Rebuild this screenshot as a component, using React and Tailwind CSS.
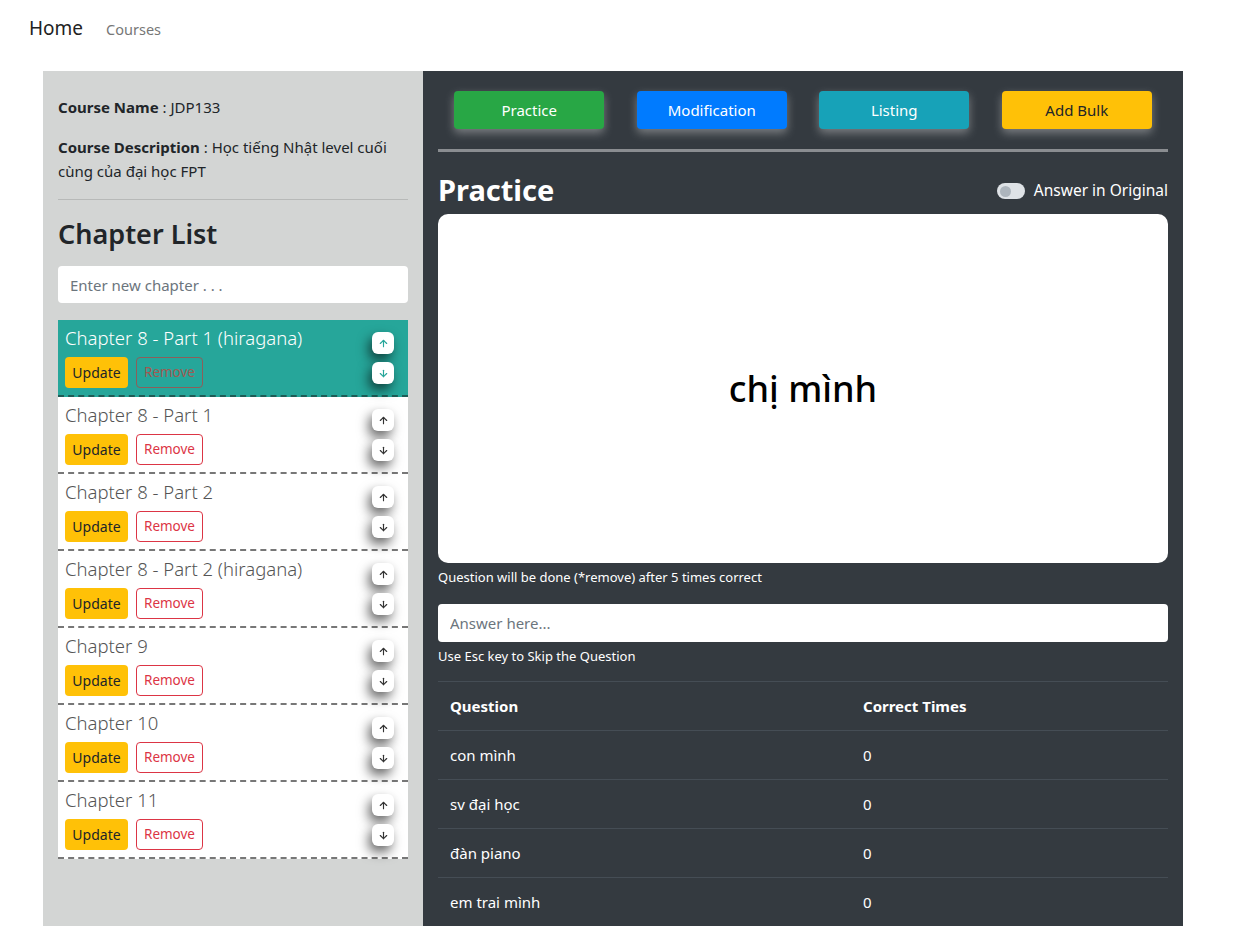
import { ArrowUp, ArrowDown } from 'lucide-react';

const chapters = [
  'Chapter 8 - Part 1 (hiragana)',
  'Chapter 8 - Part 1',
  'Chapter 8 - Part 2',
  'Chapter 8 - Part 2 (hiragana)',
  'Chapter 9',
  'Chapter 10',
  'Chapter 11',
];

const rows = [
  ['con mình', 0],
  ['sv đại học', 0],
  ['đàn piano', 0],
  ['em trai mình', 0],
];

const font = { fontFamily: '"Noto Sans", "Open Sans", sans-serif' };

function ChapterItem({ name, active }) {
  return (
    <div
      className={`flex justify-between h-[77px] border-b-2 border-dashed pl-[7px] pr-[14px] ${
        active ? 'bg-[#26a69a] border-[#1d5c56]' : 'bg-white border-[#777]'
      }`}
    >
      <div className="flex flex-col">
        <div className={`text-[18.5px] font-light leading-[26px] mt-[5px] ${active ? 'text-white' : 'text-[#555]'}`}>{name}</div>
        <div className="flex gap-2 mt-[6px]">
          <button className="h-[31px] w-[63px] rounded bg-[#ffc107] text-[14px] text-[#212529]">Update</button>
          <button
            className={`h-[31px] w-[67px] rounded border text-[13.5px] ${
              active ? 'border-[#8c5f5a] text-[#a05a52]' : 'border-[#dc3545] text-[#dc3545] bg-white'
            }`}
          >
            Remove
          </button>
        </div>
      </div>
      <div className="flex flex-col gap-2 pt-3">
        <button className="w-[22px] h-[22px] rounded-md bg-white flex items-center justify-center shadow-[-3px_6px_12px_rgba(0,0,0,0.6)]">
          <ArrowUp size={11} strokeWidth={2.5} className={active ? 'text-[#26a69a]' : 'text-[#333]'} />
        </button>
        <button className="w-[22px] h-[22px] rounded-md bg-white flex items-center justify-center shadow-[-3px_6px_12px_rgba(0,0,0,0.6)]">
          <ArrowDown size={11} strokeWidth={2.5} className={active ? 'text-[#26a69a]' : 'text-[#333]'} />
        </button>
      </div>
    </div>
  );
}

export default function App() {
  return (
    <div className="min-h-screen bg-white text-[#212529]" style={font}>
      <nav className="flex items-baseline h-[71px] px-[29px] pt-[14px]">
        <span className="text-[19px] text-[#222]">Home</span>
        <span className="text-[14.5px] text-[#777] ml-[23px]">Courses</span>
      </nav>

      <div className="flex mx-[43px] w-[1140px]">
        {/* left column */}
        <div className="w-[380px] bg-[#d3d5d4] px-[15px] pt-[24px] pb-4">
          <p className="text-[15px] leading-[24px]">
            <b className="font-bold">Course Name</b> : JDP133
          </p>
          <p className="text-[15px] leading-[24px] mt-[16px]">
            <b className="font-bold">Course Description</b> : Học tiếng Nhật level cuối cùng của đại học FPT
          </p>
          <div className="border-t border-[#b7b9b8] mt-[16px]" />
          <h2 className="text-[27px] font-semibold leading-[34px] mt-[17px]">Chapter List</h2>
          <input
            className="mt-[15px] w-full h-[37px] bg-white rounded px-3 text-[15px] outline-none placeholder:text-[#6c757d]"
            placeholder="Enter new chapter . . ."
          />
          <div className="mt-[17px]">
            {chapters.map((c, i) => (
              <ChapterItem key={c} name={c} active={i === 0} />
            ))}
          </div>
        </div>

        {/* right column */}
        <div className="flex-1 bg-[#343a40] px-[15px] pt-[20px] pb-4 text-white">
          <div className="grid grid-cols-4">
            {[
              ['Practice', 'bg-[#28a745] text-white'],
              ['Modification', 'bg-[#007bff] text-white'],
              ['Listing', 'bg-[#17a2b8] text-white'],
              ['Add Bulk', 'bg-[#ffc107] text-[#212529]'],
            ].map(([t, cls]) => (
              <div key={t} className="flex justify-center">
                <button className={`w-[150px] h-[38px] rounded text-[15px] shadow-[0_4px_10px_rgba(210,210,210,0.45)] ${cls}`}>{t}</button>
              </div>
            ))}
          </div>
          <div className="h-[3px] bg-[#8a8d91] mt-[20px]" />
          <div className="flex items-center justify-between mt-[20px]">
            <h1 className="text-[29px] font-bold leading-[36px]">Practice</h1>
            <label className="flex items-center gap-[9px] text-[15.5px] mt-[2px]">
              <span className="w-[28px] h-[16px] rounded-full bg-[#dee2e6] flex items-center px-[3px]">
                <span className="w-[11px] h-[11px] rounded-full bg-[#adb5bd]" />
              </span>
              Answer in Original
            </label>
          </div>
          <div className="mt-[6px] h-[349px] bg-white rounded-[10px] flex items-center justify-center">
            <span className="text-[36px] font-medium text-black">chị mình</span>
          </div>
          <p className="text-[13px] mt-[5px] leading-[18px]">Question will be done (*remove) after 5 times correct</p>
          <input
            className="mt-[18px] w-full h-[38px] bg-white rounded px-3 text-[15px] text-[#495057] outline-none placeholder:text-[#6c757d]"
            placeholder="Answer here..."
          />
          <p className="text-[13px] mt-[5px] leading-[18px]">Use Esc key to Skip the Question</p>
          <table className="w-full mt-[16px] text-[15px] border-collapse">
            <thead>
              <tr className="border-t border-[#454d55]">
                <th className="text-left font-bold h-[49px] px-3 w-[413px]">Question</th>
                <th className="text-left font-bold h-[49px] px-3">Correct Times</th>
              </tr>
            </thead>
            <tbody>
              {rows.map(([q, n]) => (
                <tr key={q} className="border-t border-[#454d55]">
                  <td className="h-[49px] px-3">{q}</td>
                  <td className="h-[49px] px-3">{n}</td>
                </tr>
              ))}
            </tbody>
          </table>
        </div>
      </div>
    </div>
  );
}
